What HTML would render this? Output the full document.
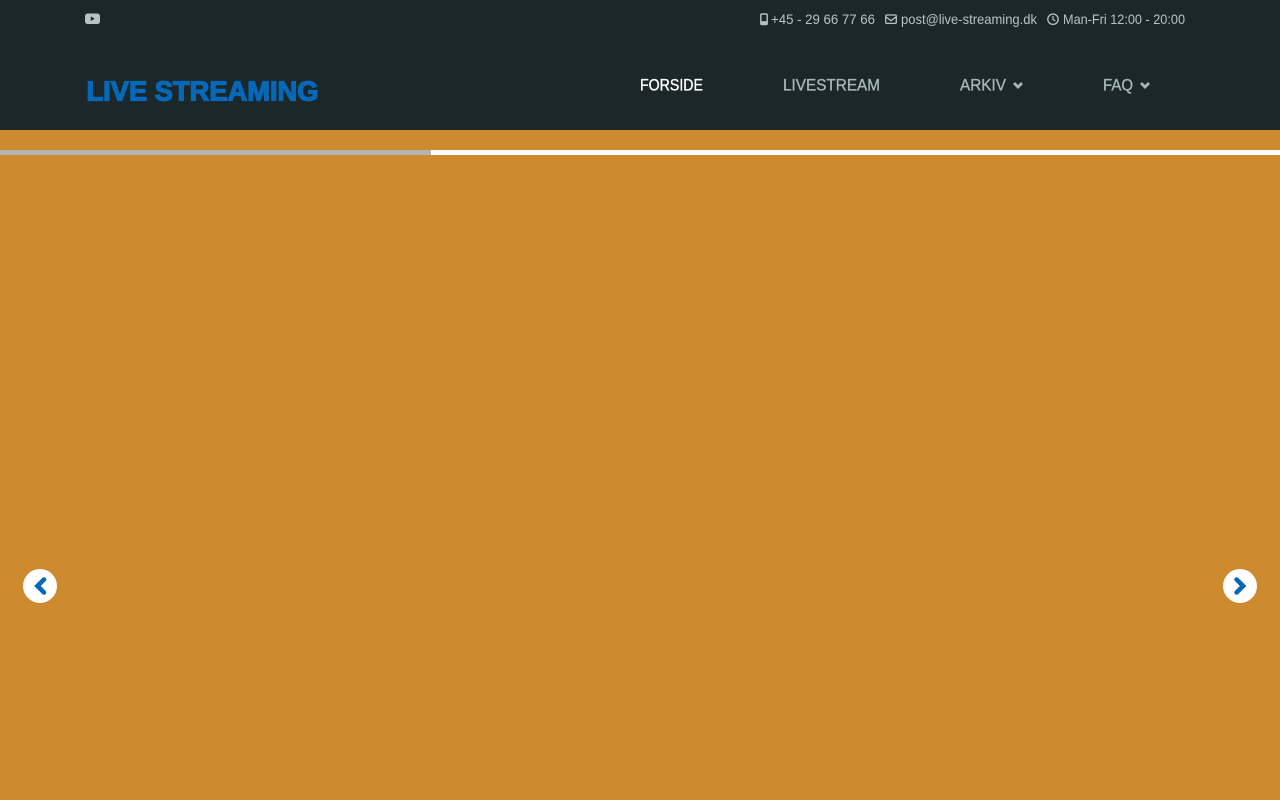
<!DOCTYPE html>
<html lang="da">
<head>
<meta charset="utf-8">
<title>Live Streaming</title>
<style>
html,body{margin:0;padding:0;width:1280px;height:800px;overflow:hidden;background:#cd8a2f}
svg{display:block;position:absolute;left:0;top:0}
text{font-family:"Liberation Sans",sans-serif}
</style>
</head>
<body>
<svg width="1280" height="800" viewBox="0 0 1280 800" xmlns="http://www.w3.org/2000/svg">
  <rect width="1280" height="800" fill="#cd8a2f"/>
  <rect width="1280" height="130" fill="#1c272a"/>

  <!-- progress -->
  <rect x="0" y="150" width="1280" height="5" fill="#ffffff"/>
  <rect x="0" y="150" width="431" height="5" fill="#b4b4b4"/>

  <!-- youtube -->
  <rect x="85" y="13.5" width="15" height="10.5" rx="2.6" fill="#b4c4c6"/>
  <path d="M90.8 16.4v4.6l3.9-2.3z" fill="#1c272a"/>

  <!-- phone -->
  <rect x="760.8" y="14" width="6.4" height="10.6" rx="1.1" fill="none" stroke="#b4c4c6" stroke-width="1.4"/>
  <rect x="760.5" y="21.2" width="7" height="3.6" fill="#b4c4c6"/>
  <text x="771" y="24" font-size="14" fill="#b4c4c6" textLength="104" lengthAdjust="spacingAndGlyphs">+45 - 29 66 77 66</text>

  <!-- mail -->
  <rect x="885.7" y="15" width="10.6" height="8.4" rx="1.2" fill="none" stroke="#b4c4c6" stroke-width="1.3"/>
  <path d="M886 16.9l5 3.8 5-3.8" fill="none" stroke="#b4c4c6" stroke-width="1.3"/>
  <text x="901" y="24" font-size="14" fill="#b4c4c6" textLength="136" lengthAdjust="spacingAndGlyphs">post@live-streaming.dk</text>

  <!-- clock -->
  <circle cx="1053" cy="19.2" r="5.2" fill="none" stroke="#b4c4c6" stroke-width="1.3"/>
  <path d="M1053 16v3.5l2.3 1.4" fill="none" stroke="#b4c4c6" stroke-width="1.2"/>
  <text x="1063" y="24" font-size="14" fill="#b4c4c6" textLength="122" lengthAdjust="spacingAndGlyphs">Man-Fri 12:00 - 20:00</text>

  <!-- logo -->
  <text x="86.5" y="100.6" font-size="27.5" font-weight="700" fill="#0568b8" stroke="#0568b8" stroke-width="1.3" textLength="232" lengthAdjust="spacingAndGlyphs">LIVE STREAMING</text>

  <!-- nav -->
  <text x="640" y="90.5" font-size="17" fill="#ffffff" stroke="#ffffff" stroke-width=".35" textLength="63" lengthAdjust="spacingAndGlyphs">FORSIDE</text>
  <text x="783" y="90.5" font-size="17" fill="#a5b7b9" stroke="#a5b7b9" stroke-width=".35" textLength="97" lengthAdjust="spacingAndGlyphs">LIVESTREAM</text>
  <text x="960" y="90.5" font-size="17" fill="#a5b7b9" stroke="#a5b7b9" stroke-width=".35" textLength="46" lengthAdjust="spacingAndGlyphs">ARKIV</text>
  <path d="M1014 83l4 4 4-4" fill="none" stroke="#a5b7b9" stroke-width="2.8"/>
  <text x="1103" y="90.5" font-size="17" fill="#a5b7b9" stroke="#a5b7b9" stroke-width=".35" textLength="30" lengthAdjust="spacingAndGlyphs">FAQ</text>
  <path d="M1141 83l4 4 4-4" fill="none" stroke="#a5b7b9" stroke-width="2.8"/>

  <!-- slider arrows -->
  <circle cx="40" cy="586" r="17" fill="#ffffff"/>
  <path d="M44 579.5L37.5 586l6.5 6.5" fill="none" stroke="#0568b8" stroke-width="4.6" stroke-linecap="round" stroke-linejoin="miter"/>
  <circle cx="1240" cy="586" r="17" fill="#ffffff"/>
  <path d="M1236.6 579.5l6.5 6.5-6.5 6.5" fill="none" stroke="#0568b8" stroke-width="4.6" stroke-linecap="round" stroke-linejoin="miter"/>
</svg>
</body>
</html>
